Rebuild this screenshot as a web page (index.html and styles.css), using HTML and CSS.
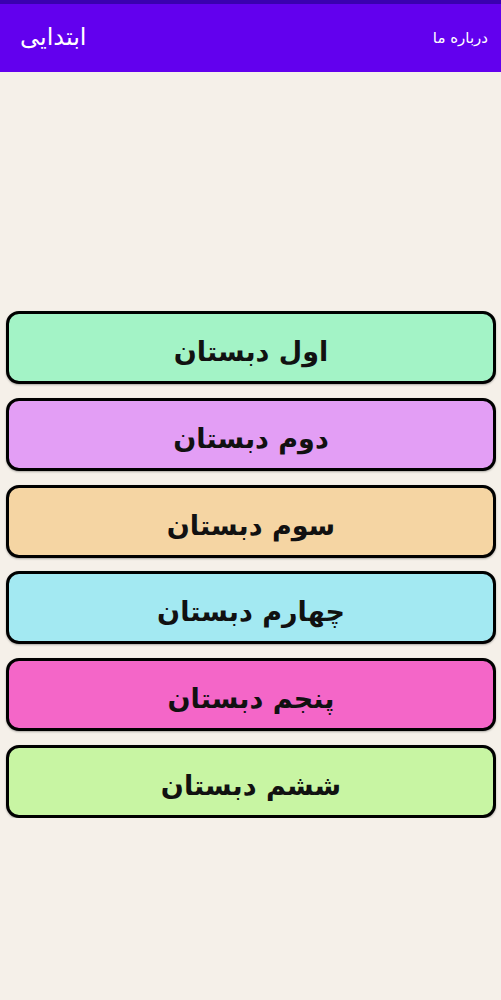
FILE: index.html
```html
<!DOCTYPE html>
<html lang="fa">
<head>
<meta charset="utf-8">
<link rel="stylesheet" href="styles.css">
</head>
<body>
<div class="status"></div>
<header class="appbar">
  <span class="title">ابتدایی</span>
  <span class="about">درباره ما</span>
</header>
<main class="list">
  <div class="btn green">اول دبستان</div>
  <div class="btn purple">دوم دبستان</div>
  <div class="btn orange">سوم دبستان</div>
  <div class="btn cyan">چهارم دبستان</div>
  <div class="btn pink">پنجم دبستان</div>
  <div class="btn lime">ششم دبستان</div>
</main>
</body>
</html>
```
FILE: styles.css
```css
html, body {
  margin: 0;
  padding: 0;
  background: #f5f0e9;
  font-family: "DejaVu Sans", "Noto Sans", sans-serif;
}
.status {
  height: 4px;
  background: #3a00b0;
}
.appbar {
  height: 68px;
  background: #6200ee;
  color: #fff;
  display: flex;
  align-items: center;
  justify-content: space-between;
  padding: 0 13px 0 20px;
}
.title {
  font-size: 24px;
  padding-bottom: 2px;
}
.about {
  font-size: 15px;
}
.list {
  display: flex;
  flex-direction: column;
  gap: 13.8px;
  padding: 239px 5px 0 6px;
}
.btn {
  height: 73px;
  box-sizing: border-box;
  border: 3px solid #000;
  border-radius: 13px;
  display: flex;
  align-items: center;
  justify-content: center;
  padding-top: 8px;
  font-size: 27px;
  font-weight: bold;
  color: #111;
  direction: rtl;
  box-shadow: 0 1px 2px rgba(0,0,0,0.3);
}
.green { background: #a3f3c6; }
.purple { background: #e39ef5; }
.orange { background: #f5d5a3; }
.cyan { background: #a3e9f2; }
.pink { background: #f466c8; }
.lime { background: #c8f5a3; }
```
